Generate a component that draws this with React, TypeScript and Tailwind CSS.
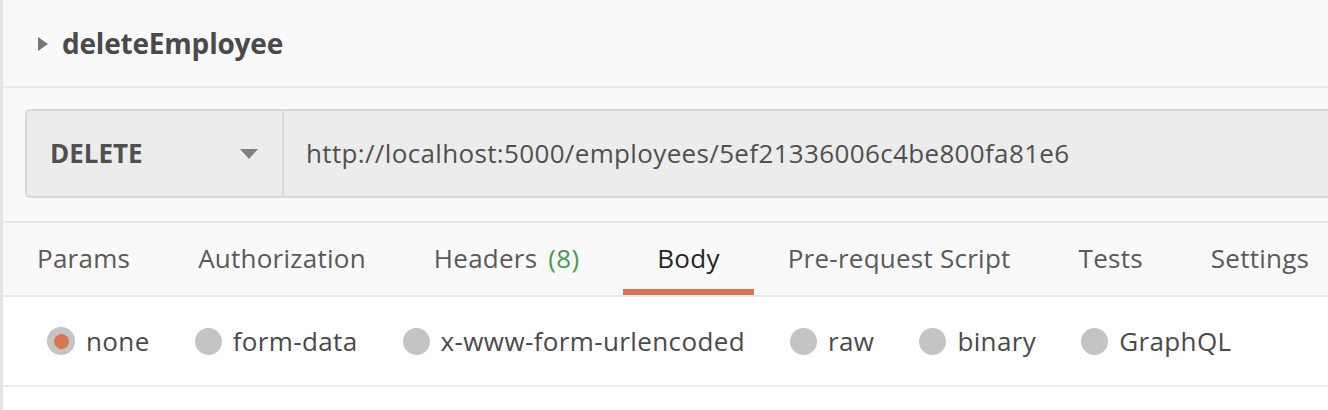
import React from 'react'

const tabs = [
  { label: 'Params' },
  { label: 'Authorization' },
  { label: 'Headers', count: '(8)' },
  { label: 'Body', active: true },
  { label: 'Pre-request Script' },
  { label: 'Tests' },
  { label: 'Settings' },
]

const bodyTypes = ['none', 'form-data', 'x-www-form-urlencoded', 'raw', 'binary', 'GraphQL']

export default function App() {
  return (
    <div
      className="w-[1328px] h-[410px] overflow-hidden bg-[#f9f9f9] border-l-[3px] border-[#e4e4e4] text-[#505050]"
      style={{ fontFamily: '"Open Sans", "Noto Sans", sans-serif' }}
    >
      {/* заголовок запроса */}
      <div className="h-[88px] flex items-center pl-[35px] border-b-2 border-[#e9e9e9]">
        <svg viewBox="0 0 10 14" className="w-[10px] h-[14px] mr-[14px] mt-[1px]">
          <path d="M0 0 L10 7 L0 14 Z" fill="#777" />
        </svg>
        <span className="text-[28px] font-bold text-[#4a4a4a] tracking-[-0.2px]">deleteEmployee</span>
      </div>

      {/* строка метода и url */}
      <div className="pt-[21px] pb-[23px] pl-[22px] border-b-2 border-[#e9e9e9]">
        <div className="h-[89px] flex bg-[#ececec] border-2 border-r-0 border-[#d9d9d9] rounded-l-[5px]">
          <div className="w-[257px] shrink-0 flex items-center justify-between pl-[23px] pr-[24px] border-r-2 border-[#d9d9d9]">
            <span className="text-[26px] font-bold text-[#505050]">DELETE</span>
            <svg viewBox="0 0 18 10" className="w-[18px] h-[10px]">
              <path d="M0 0 L18 0 L9 10 Z" fill="#808080" />
            </svg>
          </div>
          <div className="flex items-center pl-[22px] text-[26px] tracking-[0.35px] whitespace-nowrap text-[#505050]">
            http://localhost:5000/employees/5ef21336006c4be800fa81e6
          </div>
        </div>
      </div>

      {/* вкладки */}
      <div className="h-[74px] flex border-b-2 border-[#e9e9e9]">
        {tabs.map((t) => (
          <div
            key={t.label}
            className={
              'shrink-0 whitespace-nowrap flex items-center pl-[34px] pt-[4px] border-b-[6px] text-[26px] tracking-[0.25px] ' +
              (t.count ? 'pr-[44px] ' : 'pr-[34px] ') +
              (t.active ? 'border-[#db7450] text-[#262626]' : 'border-transparent text-[#5a5a5a]')
            }
          >
            {t.label}
            {t.count && <span className="ml-[11px] text-[#4a9a4f]">{t.count}</span>}
          </div>
        ))}
      </div>

      {/* тип тела */}
      <div className="h-[90px] flex items-center gap-[45px] pl-[44px] bg-white border-b-2 border-[#e9e9e9]">
        {bodyTypes.map((b, i) => (
          <div key={b} className="shrink-0 flex items-center gap-[11px]">
            {i === 0 ? (
              <span className="w-[28px] h-[28px] rounded-full bg-[#c4c4c4] flex items-center justify-center">
                <span className="w-[15px] h-[15px] rounded-full bg-[#db7450]" />
              </span>
            ) : (
              <span className="w-[27px] h-[27px] rounded-full bg-[#c4c4c4]" />
            )}
            <span className="text-[26px] tracking-[0.38px] whitespace-nowrap text-[#4a4a4a]">{b}</span>
          </div>
        ))}
      </div>
      <div className="h-[40px] bg-white" />
    </div>
  )
}
